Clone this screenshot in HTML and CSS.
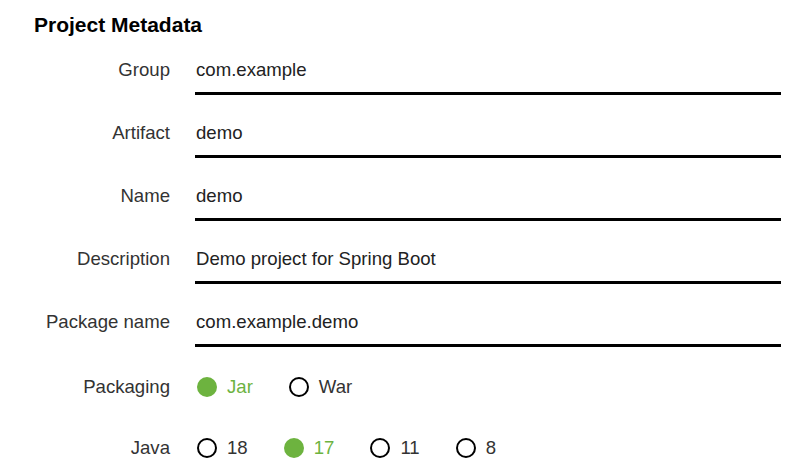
FILE: index.html
```html
<!DOCTYPE html>
<html lang="en">
<head>
	<meta charset="UTF-8">
	<meta name="viewport" content="width=device-width, initial-scale=1.0">
	<title>Project Metadata</title>
	<link rel="stylesheet" href="styles.css">
</head>
<body>
	<h2 class="title">Project Metadata</h2>
	<div class="form">
		<div class="row">
			<label class="label">Group</label>
			<div class="field">com.example</div>
		</div>
		<div class="row">
			<label class="label">Artifact</label>
			<div class="field">demo</div>
		</div>
		<div class="row">
			<label class="label">Name</label>
			<div class="field">demo</div>
		</div>
		<div class="row">
			<label class="label">Description</label>
			<div class="field">Demo project for Spring Boot</div>
		</div>
		<div class="row">
			<label class="label">Package name</label>
			<div class="field">com.example.demo</div>
		</div>
		<div class="row radios">
			<label class="label">Packaging</label>
			<div class="options">
				<span class="option checked"><span class="dot"></span>Jar</span>
				<span class="option"><span class="dot"></span>War</span>
			</div>
		</div>
		<div class="row radios">
			<label class="label">Java</label>
			<div class="options">
				<span class="option"><span class="dot"></span>18</span>
				<span class="option checked"><span class="dot"></span>17</span>
				<span class="option"><span class="dot"></span>11</span>
				<span class="option"><span class="dot"></span>8</span>
			</div>
		</div>
	</div>
</body>
</html>
```

FILE: styles.css
```css
body {
	margin: 0;
	font-family: "Liberation Sans", Arial, sans-serif;
	color: #333;
	background: #fff;
}
.title {
	margin: 13px 0 13px 34px;
	font-size: 21px;
	line-height: 24px;
	font-weight: bold;
	color: #000;
}
.form {
	padding-right: 27px;
}
.row {
	display: grid;
	grid-template-columns: 170px 1fr;
	column-gap: 25px;
	align-items: start;
	margin-bottom: 18px;
}
.label {
	text-align: right;
	font-size: 18.6px;
	line-height: 24px;
	padding-top: 8px;
	color: #333;
}
.field {
	font-size: 18.6px;
	line-height: 24px;
	padding: 8px 0 10px 1px;
	border-bottom: 3px solid #000;
	color: #222;
}
.radios .label {
	padding-top: 10px;
}
.options {
	display: flex;
	align-items: center;
	height: 43px;
	padding-left: 2px;
}
.option {
	display: flex;
	align-items: center;
	gap: 10px;
	margin-right: 36px;
	font-size: 18.6px;
	color: #333;
}
.dot {
	width: 20px;
	height: 20px;
	box-sizing: border-box;
	border: 2px solid #000;
	border-radius: 50%;
}
.option.checked {
	color: #6db33f;
}
.option.checked .dot {
	border: none;
	background: #6db33f;
}
```
